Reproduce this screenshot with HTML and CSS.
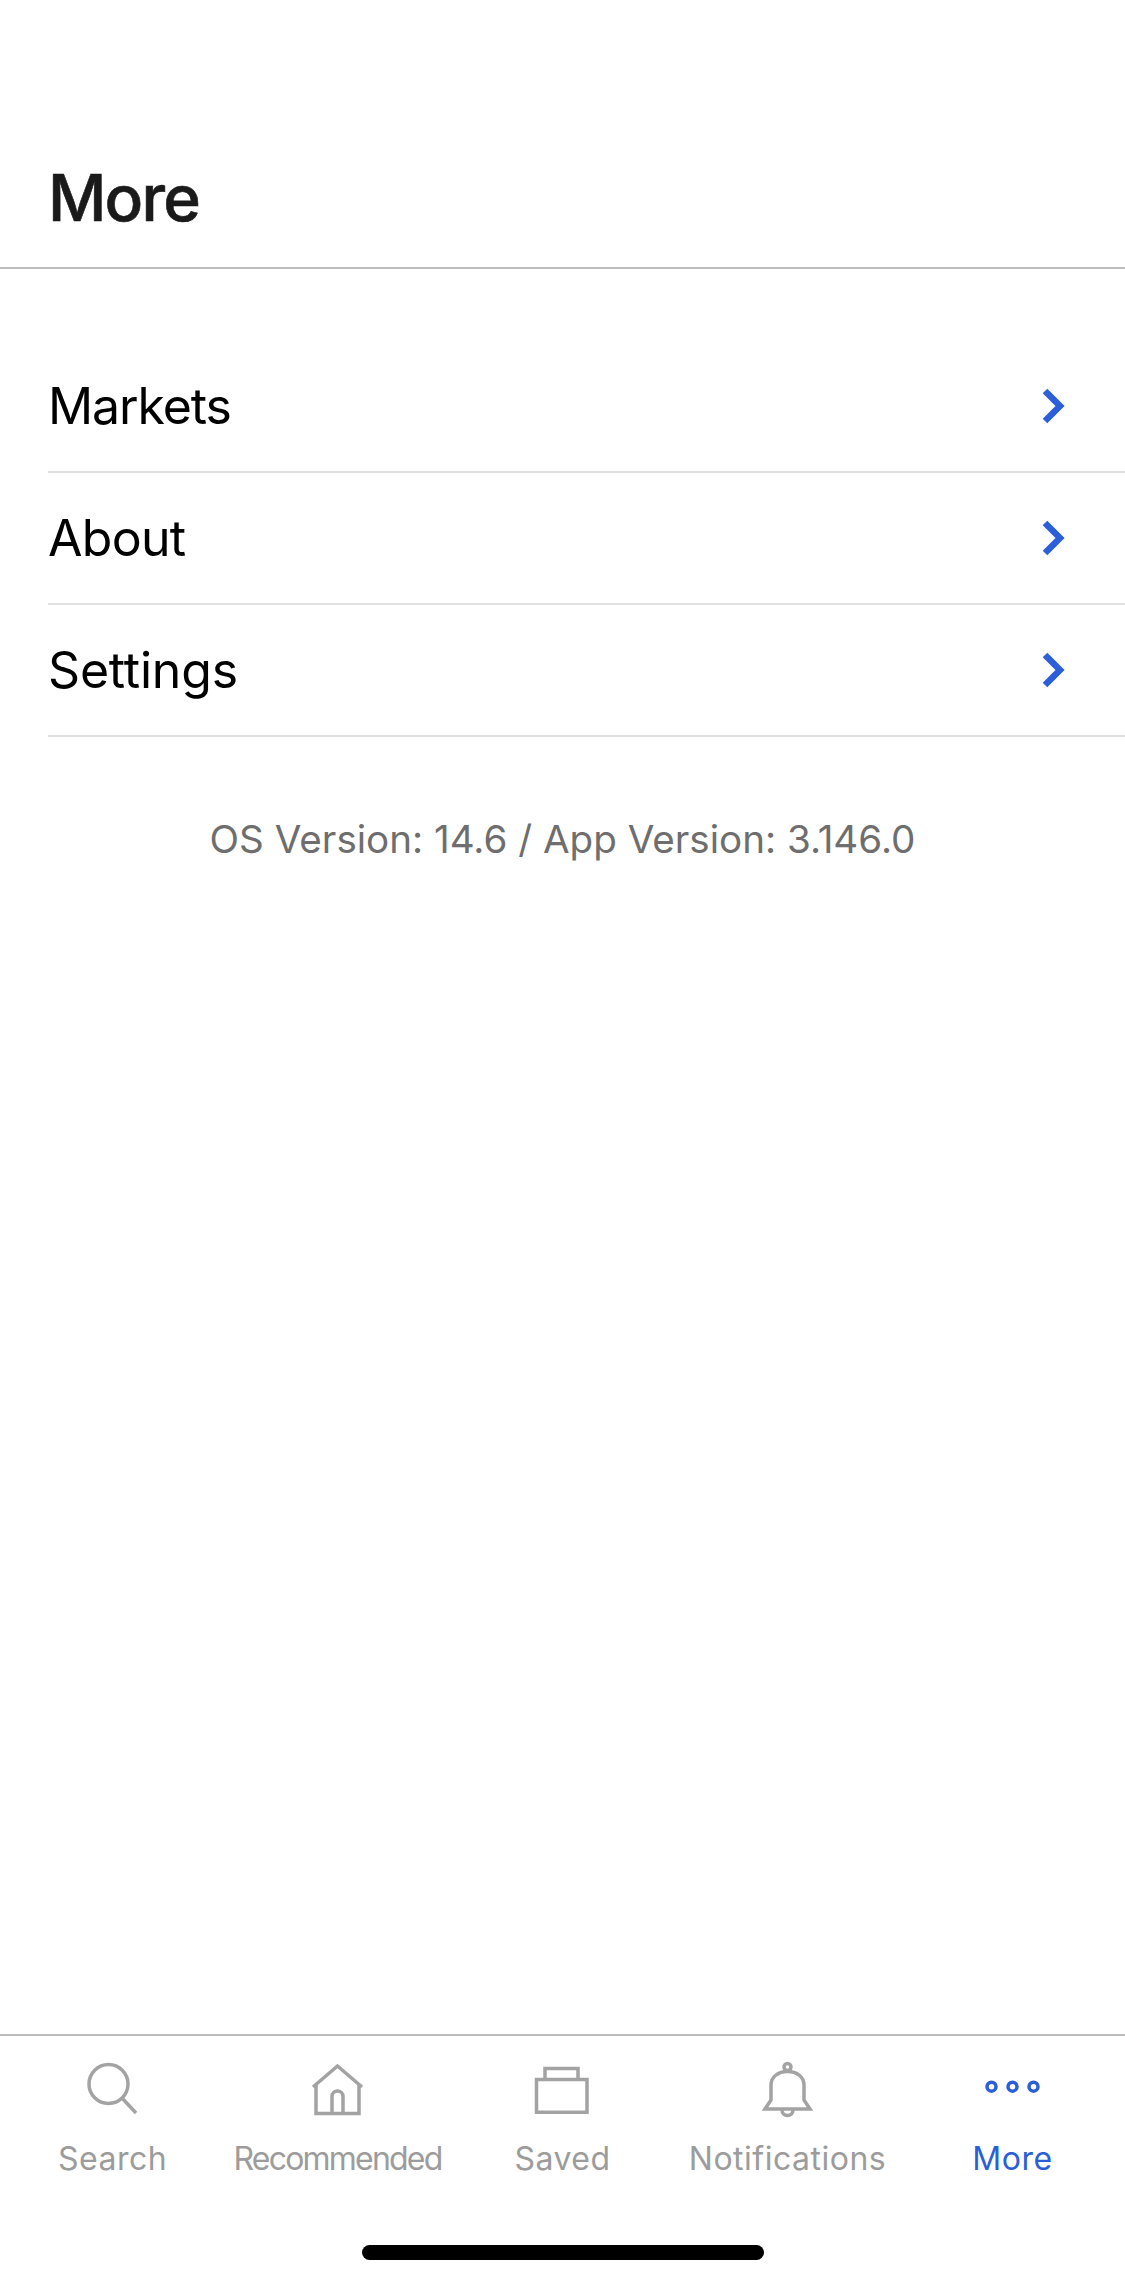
FILE: index.html
```html
<!DOCTYPE html>
<html lang="en">
<head>
<meta charset="utf-8">
<title>More</title>
<link rel="stylesheet" href="styles.css">
</head>
<body>
<div class="screen">
  <header class="header"><h1 class="title">More</h1></header>
  <main class="main">
    <ul class="menu">
      <li class="row"><span class="row-label row-label-markets">Markets</span><svg class="chev" viewBox="0 0 24 36"><path d="M3 3 L18 18 L3 33"/></svg></li>
      <li class="row"><span class="row-label">About</span><svg class="chev" viewBox="0 0 24 36"><path d="M3 3 L18 18 L3 33"/></svg></li>
      <li class="row"><span class="row-label row-label-settings">Settings</span><svg class="chev" viewBox="0 0 24 36"><path d="M3 3 L18 18 L3 33"/></svg></li>
    </ul>
    <p class="version">OS Version: 14.6 / App Version: 3.146.0</p>
  </main>
  <nav class="tabs">
    <div class="tab">
      <svg class="tab-icon" viewBox="0 0 64 64"><circle cx="27.5" cy="28" r="19.5"/><path d="M41 42 L55 57"/></svg>
      <span class="tab-label">Search</span>
    </div>
    <div class="tab">
      <svg class="tab-icon" viewBox="0 0 64 64"><path d="M7 31 L31.500 10 L56 31"/><path d="M10 29 V57.500 H53 V29"/><path d="M26 57.500 V40.500 a5.500 5.500 0 0 1 11 0 V57.500"/></svg>
      <span class="tab-label tab-label-tight">Recommended</span>
    </div>
    <div class="tab">
      <svg class="tab-icon" viewBox="0 0 64 64"><path d="M5.500 23.500 H56 V56.300 H5.500 Z"/><path d="M14 23.500 V12.500 H47 V23.500"/></svg>
      <span class="tab-label">Saved</span>
    </div>
    <div class="tab">
      <svg class="tab-icon" viewBox="0 0 64 64"><path d="M15 44 V29 C15 21 22 15.500 31.500 15.500 C41 15.500 48 21 48 29 V44 L54 53 H9 Z"/><circle cx="31.500" cy="11" r="3.500"/><path d="M26 54 a5.500 5.500 0 0 0 11 0"/></svg>
      <span class="tab-label">Notifications</span>
    </div>
    <div class="tab tab-active">
      <svg class="tab-icon" viewBox="0 0 64 64"><circle cx="10.500" cy="30.700" r="4.500"/><circle cx="31.500" cy="30.700" r="4.500"/><circle cx="52.500" cy="30.700" r="4.500"/></svg>
      <span class="tab-label">More</span>
    </div>
  </nav>
  <div class="home-bar"><span class="home-indicator"></span></div>
</div>
</body>
</html>
```
FILE: styles.css
```css
* { box-sizing: border-box; }
html, body { margin: 0; padding: 0; background: #fff; }
.screen {
  width: 1125px;
  height: 2284px;
  display: flex;
  flex-direction: column;
  font-family: Inter, "Liberation Sans", sans-serif;
  overflow: hidden;
}
.header {
  height: 269px;
  padding: 0 48px;
  display: flex;
  align-items: flex-end;
  border-bottom: 2px solid #bdbdbd;
}
.title {
  margin: 0 0 31px;
  font-size: 64px;
  line-height: 76px;
  font-weight: 500;
  color: #1a1a1a;
  letter-spacing: -1.800px;
  -webkit-text-stroke: 0.6px #1a1a1a;
}
.main { flex: 1; padding-top: 72px; }
.menu { list-style: none; margin: 0 0 0 48px; padding: 0; }
.row {
  height: 132px;
  display: flex;
  align-items: center;
  justify-content: space-between;
  padding-right: 59px;
  border-bottom: 2px solid #e0e0e0;
}
.row-label { font-size: 50px; color: #000; letter-spacing: -0.7px; }
.row-label-markets { letter-spacing: -1.1px; }
.row-label-settings { letter-spacing: -0.2px; }
.chev { width: 24px; height: 36px; fill: none; stroke: #2b5fd9; stroke-width: 6.500; }
.version {
  margin: 79px 0 0;
  text-align: center;
  font-size: 38.600px;
  line-height: 46px;
  color: #6e6e6e;
}
.tabs {
  display: grid;
  grid-template-columns: repeat(5, 1fr);
  height: 170px;
  padding-top: 20px;
  border-top: 2px solid #bdbdbd;
  color: #9c9c9c;
}
.tab { display: flex; flex-direction: column; align-items: center; }
.tab-active { color: #2b5fd9; }
.tab-icon { width: 64px; height: 64px; fill: none; stroke: #a3a3a3; stroke-width: 3.500; }
.tab-active .tab-icon { stroke: #2b5fd9; }
.tab-label { margin-top: 20px; font-size: 32px; line-height: 38px; white-space: nowrap; letter-spacing: 0.5px; }
.tab-label-tight { letter-spacing: -1.8px; }
.home-bar { height: 80px; padding-top: 41px; display: flex; justify-content: center; }
.home-indicator { width: 402px; height: 15px; border-radius: 8px; background: #000; }
```
